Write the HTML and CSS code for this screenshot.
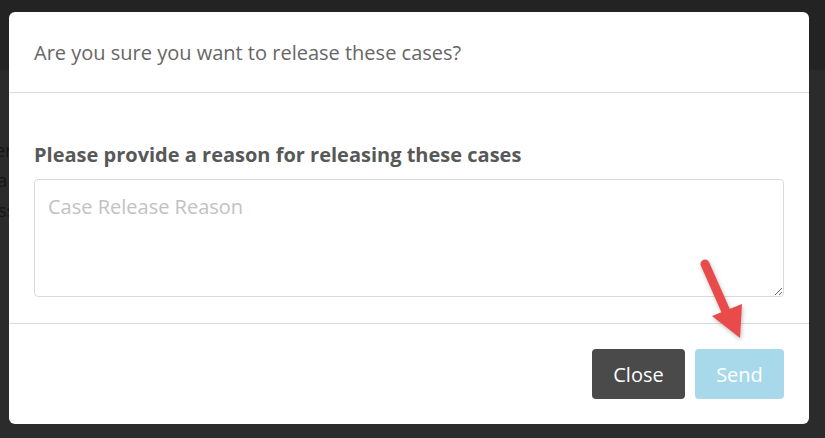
FILE: index.html
```html
<!DOCTYPE html>
<html>
  <head>
    <title>Release Cases</title>
    <link rel="stylesheet" href="styles.css">
  </head>
  <body>
    <div class="page">
      <div class="page-top"></div>
      <div class="page-list">
        <p class="line-1">Owner</p>
        <p class="line-2">Mana</p>
        <p class="line-3">Class</p>
      </div>
    </div>

    <div class="backdrop">
      <div class="modal">
        <div class="modal-header">
          <h4 class="modal-title">Are you sure you want to release these cases?</h4>
        </div>
        <div class="modal-body">
          <label class="reason-label" for="reason">Please provide a reason for releasing these cases</label>
          <textarea id="reason" class="reason-input" placeholder="Case Release Reason"></textarea>
        </div>
        <div class="modal-footer">
          <button class="btn btn-close">Close</button>
          <button class="btn btn-send" disabled>Send</button>
        </div>
      </div>
    </div>

    <svg class="pointer" width="825" height="438" viewBox="0 0 825 438">
      <line x1="705" y1="264" x2="728" y2="316" stroke="#e94b4a" stroke-width="9" stroke-linecap="round"/>
      <polygon points="712,316 742,304 740,338" fill="#e94b4a"/>
    </svg>
  </body>
</html>
```

FILE: styles.css
```css
body {
  margin: 0;
  font-family: "Open Sans", "Noto Sans", sans-serif;
  background-color: #2b2b2b;
  width: 825px;
  height: 438px;
  overflow: hidden;
  position: relative;
}

.page-top {
  height: 70px;
  background-color: #232323;
}

.page-list {
  padding-top: 65px;
}

.page-list p {
  margin: 0;
  font-size: 18px;
  line-height: 30px;
  color: #161616;
}

.line-1 { margin-left: -44px !important; }
.line-2 { margin-left: -40px !important; }
.line-3 { margin-left: -28px !important; }

.backdrop {
  position: absolute;
  top: 0;
  left: 0;
  right: 0;
  bottom: 0;
}

.modal {
  position: absolute;
  top: 12px;
  left: 9px;
  width: 800px;
  height: 412px;
  background-color: #fff;
  border-radius: 6px;
  display: flex;
  flex-direction: column;
}

.modal-header {
  height: 80px;
  padding: 0 25px;
  display: flex;
  align-items: center;
  border-bottom: 1px solid #dcdcdc;
}

.modal-title {
  margin: 0;
  font-size: 20px;
  font-weight: normal;
  color: #666;
}

.modal-body {
  padding: 25px 25px 26px 25px;
  display: flex;
  flex-direction: column;
  border-bottom: 1px solid #dcdcdc;
}

.reason-label {
  margin-top: 25px;
  margin-bottom: 12px;
  font-size: 20px;
  line-height: 24px;
  font-weight: bold;
  color: #585858;
}

.reason-input {
  height: 118px;
  box-sizing: border-box;
  border: 1px solid #dadada;
  border-radius: 4px;
  padding: 13px 13px;
  font-family: "Open Sans", "Noto Sans", sans-serif;
  font-size: 20px;
  color: #555;
  resize: vertical;
}

.reason-input::placeholder {
  color: #c2c2c2;
}

.modal-footer {
  padding: 25px;
  display: flex;
  justify-content: flex-end;
  gap: 10px;
}

.btn {
  height: 50px;
  border: none;
  border-radius: 4px;
  font-family: "Open Sans", "Noto Sans", sans-serif;
  font-size: 20px;
  color: #fff;
  padding: 0 20px;
}

.btn-close {
  width: 93px;
  background-color: #4a4a4a;
}

.btn-send {
  width: 89px;
  background-color: #a8d9ea;
}

.pointer {
  position: absolute;
  top: 0;
  left: 0;
  pointer-events: none;
  filter: drop-shadow(1px 2px 2px rgba(0, 0, 0, 0.25));
}
```
